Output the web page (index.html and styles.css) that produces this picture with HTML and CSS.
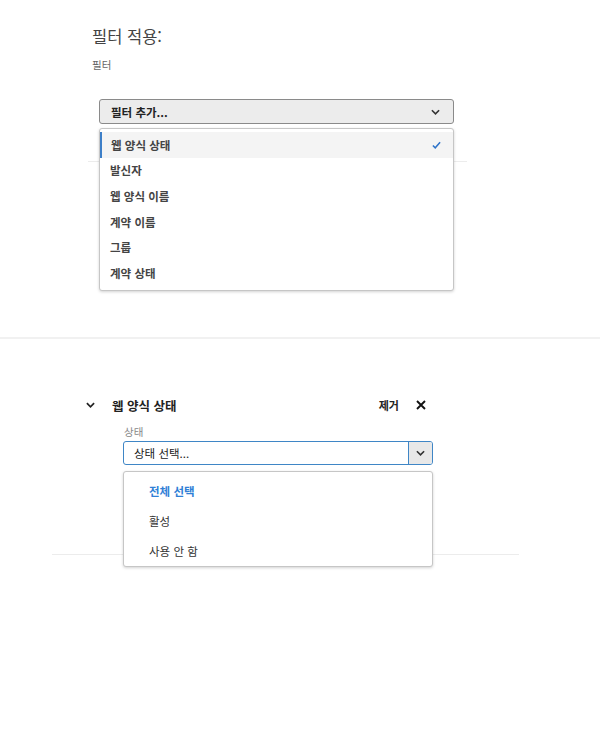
FILE: index.html
```html
<!DOCTYPE html>
<html lang="ko">
<head>
<meta charset="utf-8">
<link rel="stylesheet" href="styles.css">
</head>
<body>
<section class="apply">
  <h1 class="apply-title">필터 적용:</h1>
  <div class="field-label">필터</div>
  <div class="picker">
    <div class="picker-btn">
      <span>필터 추가...</span>
      <svg class="chev" viewBox="0 0 10 6" width="9" height="6"><path d="M1 1l4 4 4-4" fill="none" stroke="#333" stroke-width="1.8"/></svg>
    </div>
    <ul class="menu menu-filters">
      <li class="item active"><span>웹 양식 상태</span><svg class="check" viewBox="0 0 10 8" width="9" height="8"><path d="M1 4.5l2.6 2.6L9 1" fill="none" stroke="#2f74c9" stroke-width="1.7"/></svg></li>
      <li class="item">발신자</li>
      <li class="item">웹 양식 이름</li>
      <li class="item">계약 이름</li>
      <li class="item">그룹</li>
      <li class="item">계약 상태</li>
    </ul>
  </div>
  <div class="divider-a"></div>
</section>
<div class="rule"></div>
<section class="filter">
  <div class="filter-head">
    <div class="head-left">
      <svg class="chev-head" viewBox="0 0 10 6" width="9" height="6"><path d="M1 1l4 4 4-4" fill="none" stroke="#222" stroke-width="1.9"/></svg>
      <span class="filter-name">웹 양식 상태</span>
    </div>
    <div class="head-right">
      <span class="remove">제거</span>
      <svg class="x" viewBox="0 0 10 10" width="10" height="10"><path d="M1 1l8 8M9 1l-8 8" stroke="#111" stroke-width="1.9"/></svg>
    </div>
  </div>
  <div class="sub">
    <div class="field-label small">상태</div>
    <div class="select-wrap">
      <div class="select">
        <span class="select-text">상태 선택...</span>
        <span class="select-btn"><svg viewBox="0 0 10 6" width="9" height="6"><path d="M1 1l4 4 4-4" fill="none" stroke="#333" stroke-width="1.8"/></svg></span>
      </div>
      <ul class="menu menu-status">
        <li class="opt all">전체 선택</li>
        <li class="opt">활성</li>
        <li class="opt">사용 안 함</li>
      </ul>
    </div>
  </div>
  <div class="divider-b"></div>
</section>
</body>
</html>
```

FILE: styles.css
```css
* { box-sizing: border-box; }
html, body { margin: 0; padding: 0; background: #fff; }
body {
  font-family: "Noto Sans CJK KR", "Noto Sans", "Liberation Sans", sans-serif;
  color: #333;
  width: 600px;
  height: 750px;
}
ul { list-style: none; margin: 0; padding: 0; }

.apply { padding-left: 92px; }
.apply-title {
  margin: 24px 0 0;
  font-size: 16.5px;
  line-height: 24px;
  font-weight: 400;
  color: #444;
}
.field-label {
  margin-top: 9px;
  font-size: 10.5px;
  line-height: 16px;
  color: #666;
}
.picker {
  position: relative;
  margin: 26px 0 0 7px;
  width: 355px;
}
.picker-btn {
  height: 25px;
  border: 1px solid #8a8a8a;
  border-radius: 3px;
  background: #ececec;
  display: flex;
  align-items: center;
  justify-content: space-between;
  padding: 0 13px 0 11px;
  font-size: 11.5px;
  font-weight: 700;
  color: #222;
}
.menu {
  position: absolute;
  left: 0;
  background: #fff;
  border: 1px solid #c6c6c6;
  border-radius: 3px;
  box-shadow: 0 1px 3px rgba(0,0,0,0.18);
  z-index: 2;
}
.menu-filters {
  top: 29px;
  width: 355px;
  padding: 3px 0 4px;
}
.item {
  height: 25.6px;
  display: flex;
  align-items: center;
  justify-content: space-between;
  padding: 0 12px 0 10px;
  font-size: 11.5px;
  font-weight: 700;
  color: #444;
}
.item.active {
  background: #f4f4f4;
  border-left: 2px solid #3d7fc8;
  padding-left: 9px;
}
.divider-a {
  margin: 37px 0 0 -4px;
  width: 379px;
  height: 1px;
  background: #ececec;
}
.rule {
  margin-top: 175px;
  height: 2px;
  background: #f1f1f1;
}

.filter { padding-left: 86px; }
.filter-head {
  margin-top: 56px;
  height: 20px;
  width: 340px;
  display: flex;
  align-items: center;
  justify-content: space-between;
}
.head-left { display: flex; align-items: center; }
.chev-head { margin-right: 17px; }
.filter-name {
  font-size: 12.5px;
  font-weight: 700;
  color: #222;
}
.head-right { display: flex; align-items: center; }
.remove {
  font-size: 11px;
  font-weight: 700;
  color: #222;
  margin-right: 17px;
}
.sub { padding-left: 37px; }
.field-label.small {
  margin-top: 9px;
  font-size: 10.5px;
  color: #888;
  padding-left: 1px;
}
.select-wrap {
  position: relative;
  margin-top: 1px;
  width: 310px;
}
.select {
  height: 24px;
  border: 1px solid #3f86c6;
  border-radius: 3px;
  display: flex;
  align-items: stretch;
  overflow: hidden;
}
.select-text {
  flex: 1;
  display: flex;
  align-items: center;
  padding-left: 10px;
  font-size: 11.5px;
  color: #222;
}
.select-btn {
  width: 24px;
  background: #e8e8e8;
  border-left: 1px solid #3f86c6;
  display: flex;
  align-items: center;
  justify-content: center;
}
.menu-status {
  top: 30px;
  width: 310px;
  padding: 4px 0 0;
  height: 96px;
}
.opt {
  height: 30px;
  display: flex;
  align-items: center;
  padding-left: 25px;
  font-size: 11.5px;
  color: #333;
}
.opt.all { color: #2f80d6; font-weight: 700; }
.divider-b {
  margin: 89px 0 0 -34px;
  width: 467px;
  height: 1px;
  background: #ececec;
}
```
